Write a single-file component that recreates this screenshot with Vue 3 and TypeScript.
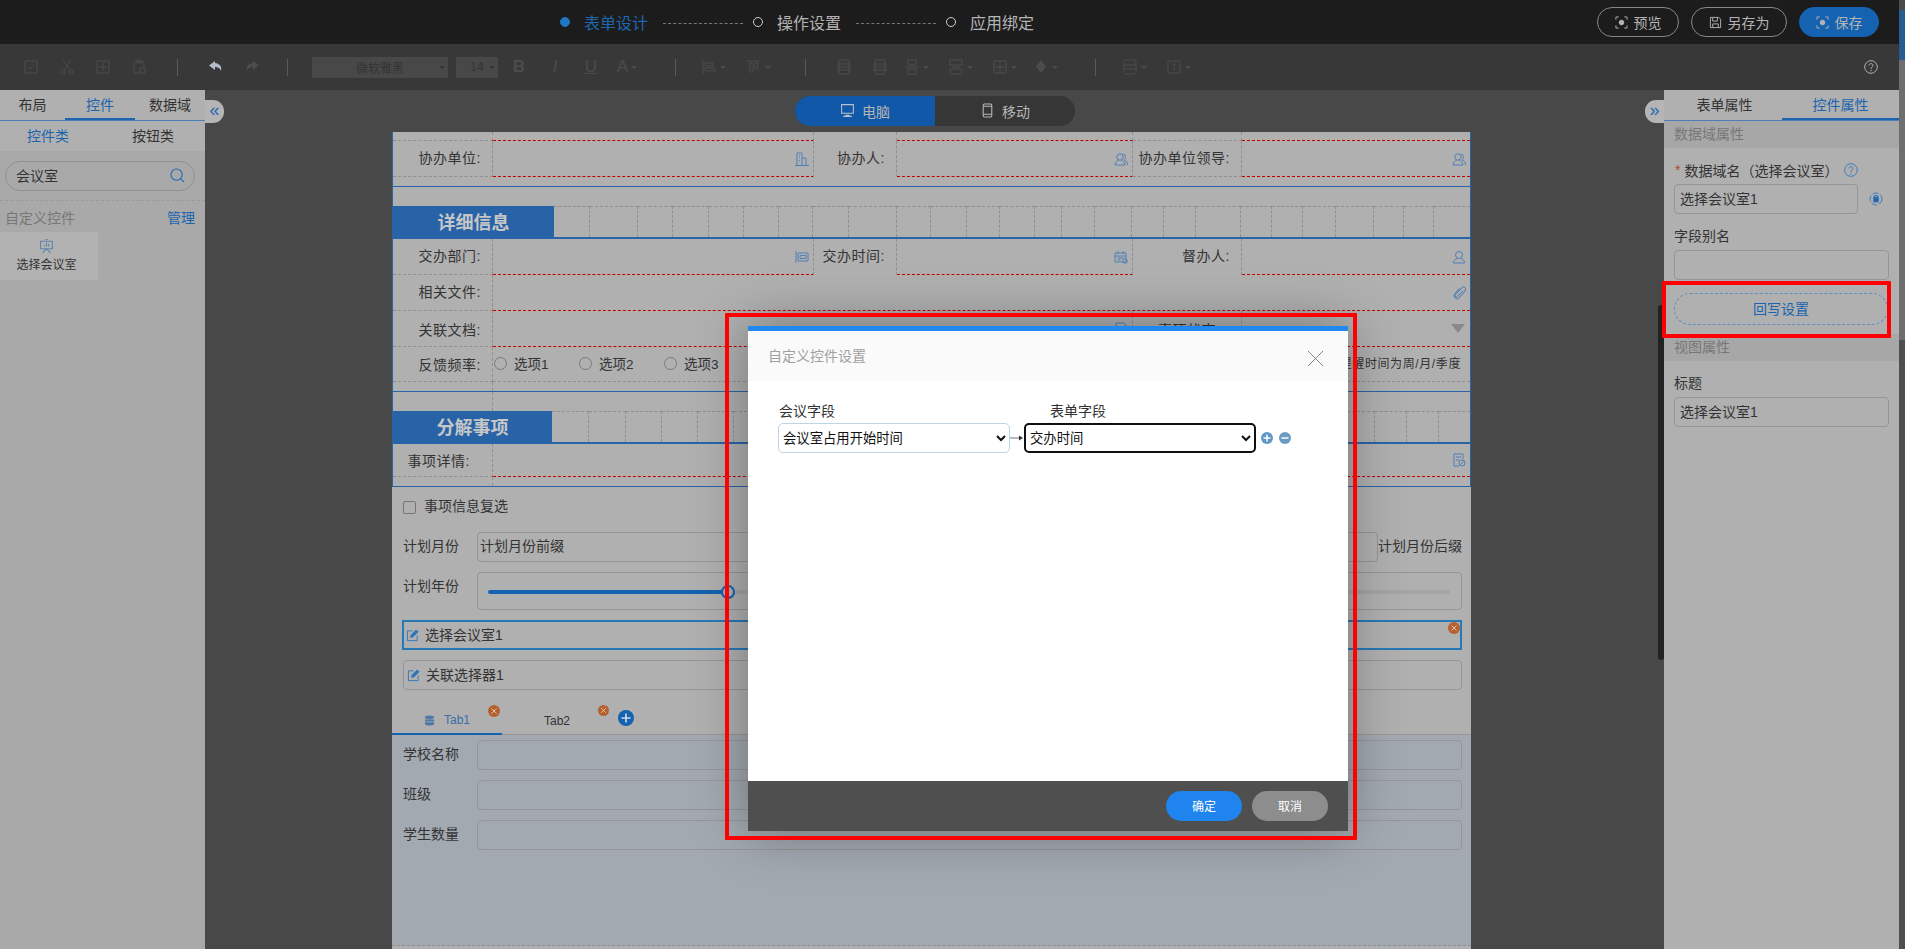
<script setup lang="ts">
const bounds1: number[] = [554, 590, 638, 673, 709, 744, 779, 813, 849, 897, 931, 967, 1000, 1035, 1062, 1095, 1132, 1164, 1196, 1241, 1272, 1303, 1336, 1374, 1404, 1434, 1470]
const bounds2: number[] = [552, 589, 626, 662, 698, 734, 1375, 1407, 1439, 1470]
const widths = (b: number[]): number[] => b.slice(1).map((v, i) => v - b[i])
const cells1 = widths(bounds1)
const cells2 = widths(bounds2)
const radios: string[] = ['选项1', '选项2', '选项3']
const leftTabs: string[] = ['布局', '控件', '数据域']
const tabFields: string[] = ['学校名称', '班级', '学生数量']
</script>

<template>
  <div class="app">
    <header class="topbar">
      <div class="steps">
        <span class="dot on"></span><span class="step on">表单设计</span>
        <span class="dash"></span>
        <span class="dot"></span><span class="step">操作设置</span>
        <span class="dash"></span>
        <span class="dot"></span><span class="step">应用绑定</span>
      </div>
      <div class="actions">
        <button class="pill w82"><svg class="ico14" viewBox="0 0 14 14" fill="none" stroke="currentColor"><path d="M1 4V1h3M10 1h3v3M13 10v3h-3M4 13H1v-3"/><circle cx="7" cy="7" r="2.5" fill="currentColor"/></svg>预览</button>
        <button class="pill w96"><svg class="ico14" viewBox="0 0 14 14" fill="none" stroke="currentColor"><path d="M1.500 1.500h9l2 2v9h-11zM4 1.500v4h5v-4M4 12.500v-4h6v4"/></svg>另存为</button>
        <button class="pill w80 primary"><svg class="ico14" viewBox="0 0 14 14" fill="none" stroke="currentColor"><path d="M1 4V1h3M10 1h3v3M13 10v3h-3M4 13H1v-3"/><circle cx="7" cy="7" r="2.500" fill="currentColor"/></svg>保存</button>
      </div>
    </header>

    <div class="toolbar">
      <span class="tool"><svg viewBox="0 0 16 16"><path d="M2 2h12v12H2zM5 8l2 2 4-4"/></svg></span>
      <span class="tool"><svg viewBox="0 0 16 16"><circle cx="4" cy="13" r="2"/><circle cx="12" cy="13" r="2"/><path d="M5 11L12 1M11 11L4 1"/></svg></span>
      <span class="tool"><svg viewBox="0 0 16 16"><path d="M2 2h12v12H2zM8 4v8M4 8h8"/></svg></span>
      <span class="tool"><svg viewBox="0 0 16 16"><path d="M3 3h10v5M3 3v11h5M6 1h4v3H6zM9 9h5v5H9z"/></svg></span>
      <span class="sep m20"></span>
      <span class="tool m20"><svg class="bright" viewBox="0 0 16 16"><path d="M7 2L1 6.500 7 11V8c3 0 5 1 6 4 1-4-1-7.500-6-8z"/></svg></span>
      <span class="tool"><svg class="fill" viewBox="0 0 16 16"><path d="M9 2l6 4.500L9 11V8c-3 0-5 1-6 4-1-4 1-7.500 6-8z"/></svg></span>
      <span class="sep m17"></span>
      <span class="fsel family m24">微软雅黑<i class="caret"></i></span>
      <span class="fsel size">14<i class="caret"></i></span>
      <span class="tool txt bold m3">B</span>
      <span class="tool txt ital">I</span>
      <span class="tool txt under">U</span>
      <span class="tool txt">A<i class="caret"></i></span>
      <span class="sep m30"></span>
      <span class="tool m19"><svg viewBox="0 0 16 16"><path d="M2 1v14M4 4h8v3H4zM4 9h10v3H4z"/></svg><i class="caret"></i></span>
      <span class="tool m9"><svg viewBox="0 0 16 16"><path d="M1 2h14M4 4v9h3V4zM9 4v6h3V4z"/></svg><i class="caret"></i></span>
      <span class="sep m29"></span>
      <span class="tool m20"><svg viewBox="0 0 16 16"><path d="M3 1h10v14H3zM1 5h14M1 8h14M1 11h14"/></svg></span>
      <span class="tool"><svg viewBox="0 0 16 16"><path d="M3 1h10v14H3zM1 5h14M1 8h14M1 11h14"/></svg></span>
      <span class="tool"><svg viewBox="0 0 16 16"><path d="M4 1h8v5H4zM4 10h8v5H4zM1 8h14"/></svg><i class="caret"></i></span>
      <span class="tool m8"><svg viewBox="0 0 16 16"><path d="M2 1h12v5H2zM2 10h12v5H2zM4 8h8"/></svg><i class="caret"></i></span>
      <span class="tool m8"><svg viewBox="0 0 16 16"><path d="M2 2h12v12H2zM8 2v12M2 8h12"/></svg><i class="caret"></i></span>
      <span class="tool m5"><svg class="fill" viewBox="0 0 16 16"><path d="M8 1l5 7-5 6-5-6z"/></svg><i class="caret"></i></span>
      <span class="sep m32"></span>
      <span class="tool m20"><svg viewBox="0 0 16 16"><rect x="2" y="1" width="12" height="14" rx="2"/><path d="M2 6h12M2 10h12"/></svg><i class="caret"></i></span>
      <span class="tool m8"><svg viewBox="0 0 16 16"><path d="M2 2h12v12H2zM8 5v6M6 5h4"/></svg><i class="caret"></i></span>
      <svg class="help" viewBox="0 0 14 14" fill="none" stroke="#b4b4b4"><circle cx="7" cy="7" r="6.300"/><path d="M5 5.500C5 3 9 3 9 5.500 9 7 7 7 7 9M7 10v1.300"/></svg>
    </div>

    <div class="main">
      <aside class="left">
        <div class="ltabs">
          <span v-for="(t, i) in leftTabs" :key="t" class="ltab" :class="{ active: i === 1 }">{{ t }}</span>
        </div>
        <div class="lsub"><span class="blue">控件类</span><span>按钮类</span></div>
        <div class="search">
          <span>会议室</span>
          <svg viewBox="0 0 16 16" fill="none" stroke="#1f69b4" stroke-width="1.200"><circle cx="7" cy="7" r="6"/><path d="M11.500 11.500L15 15"/></svg>
        </div>
        <div class="customhead"><span class="muted">自定义控件</span><span class="blue">管理</span></div>
        <div class="citem">
          <svg viewBox="0 0 14 14" fill="none" stroke="#5f84ac"><path d="M6 1h2M1.500 2.500h11v7h-11zM7 9.500L3.500 13.500M7 9.500l3.500 4M5 7.500V6M7 7.500V4M9 7.500V5"/></svg>
          <span>选择会议室</span>
        </div>
      </aside>

      <section class="center">
        <span class="collapse cl">«</span>
        <span class="collapse cr">»</span>
        <span class="vscroll"></span>
        <div class="device">
          <span class="dev on"><svg viewBox="0 0 14 14" fill="#b9c1cb"><path d="M1 1h12v9H1zM2 2v7h10V2zM5 11h4v1h2v1H3v-1h2z" fill-rule="evenodd"/></svg>电脑</span>
          <span class="dev"><svg viewBox="0 0 14 14" fill="none" stroke="#b8b8b8"><rect x="3" y="1" width="8" height="12" rx="1"/><path d="M3 3h8M3 10.500h8"/></svg>移动</span>
        </div>

        <div class="canvas">
          <div class="table">
            <div class="row r-top">
              <span class="lab"></span><span class="val"></span><span class="lab none"></span><span class="val"></span><span class="lab"></span><span class="val"></span>
            </div>
            <div class="row up">
              <span class="lab">协办单位:</span>
              <span class="val"><svg class="fi" viewBox="0 0 14 14"><path d="M2 13V1h5v12M7 6h4v7M0 13.500h14M4 3.500h1M4 6h1M4 8.500h1"/></svg></span>
              <span class="lab none">协办人:</span>
              <span class="val"><svg class="fi" viewBox="0 0 14 14"><circle cx="6" cy="5" r="3.200"/><path d="M1 13c0-3 2-4 3.500-4.500M7.500 8.500C9 9 11 10 11 13H1M9 2c3 0 3 5 1 6 2 .5 3.500 2 3.500 5"/></svg></span>
              <span class="lab">协办单位领导:</span>
              <span class="val"><svg class="fi" viewBox="0 0 14 14"><circle cx="6" cy="5" r="3.200"/><path d="M1 13c0-3 2-4 3.500-4.500M7.500 8.500C9 9 11 10 11 13H1M9 2c3 0 3 5 1 6 2 .5 3.500 2 3.500 5"/></svg></span>
            </div>
            <div class="gap9"></div>
            <div class="bline"></div>
            <div class="gap19"></div>

            <div class="sechead">
              <span class="secname w1">详细信息</span>
              <span v-for="(w, i) in cells1" :key="i" class="seccell" :style="{ width: w + 'px' }"></span>
            </div>

            <div class="row up">
              <span class="lab">交办部门:</span>
              <span class="val"><svg class="fi" viewBox="0 0 14 14"><path d="M1 1v12M3 3h10v8H3zM5 5.500h6v3H5z"/></svg></span>
              <span class="lab none">交办时间:</span>
              <span class="val"><svg class="fi" viewBox="0 0 14 14"><path d="M1 3h11v9H1zM1 6h11M4 1v3M9 1v3M3.500 8h6M3.500 10h3"/><circle cx="11" cy="11" r="2.300"/></svg></span>
              <span class="lab none">督办人:</span>
              <span class="val"><svg class="fi" viewBox="0 0 14 14"><circle cx="7" cy="5" r="3.500"/><path d="M5 8.500C3 9.500 1.500 10.500 1.500 13h11c0-2.500-1.500-3.500-3.500-4.500"/></svg></span>
            </div>
            <div class="row up">
              <span class="lab">相关文件:</span>
              <span class="val s5"><svg class="fi clip" viewBox="0 0 14 14"><path d="M11 4.500l-5.500 6c-1.500 1.500-3.500-.5-2-2l6-6.500c2.500-2.500 5.500.5 3.500 3L7 12c-2.500 2.500-6.500-1-4-4.500l4.500-5"/></svg></span>
            </div>
            <div class="row">
              <span class="lab">关联文档:</span>
              <span class="val s3"><svg class="fi" viewBox="0 0 14 14"><path d="M2 1h8l2 2v10H2z"/></svg></span>
              <span class="lab none center-t">事项状态</span>
              <span class="val"><i class="tri"></i></span>
            </div>
            <div class="row r-35">
              <span class="lab">反馈频率:</span>
              <span class="val s5 grayb">
                <label v-for="r in radios" :key="r" class="radio"><i></i>{{ r }}</label>
                <span class="remind">设置提醒时间为周/月/季度</span>
              </span>
            </div>
            <div class="spacer s-9"></div>
            <div class="bline"></div>
            <div class="spacer s-19"></div>

            <div class="sechead">
              <span class="secname w2">分解事项</span>
              <span v-for="(w, i) in cells2" :key="i" class="seccell" :style="{ width: w + 'px' }"></span>
            </div>
            <div class="row r-33">
              <span class="lab pr22">事项详情:</span>
              <span class="val s5"><svg class="fi" viewBox="0 0 14 14"><path d="M11 6V1H2v12h5M4 4h5M4 7h3"/><circle cx="10" cy="10" r="3"/><path d="M8.500 11.500l3-3"/></svg></span>
            </div>
            <div class="spacer s-9"></div>
            <div class="bline"></div>
          </div>

          <div class="lower">
            <label class="check"><i></i><span class="checktext">事项信息复选</span></label>
            <div class="frow m18">
              <span class="flabel lift">计划月份</span>
              <span class="finput grow lift">计划月份前缀</span>
              <span class="suffix">计划月份后缀</span>
            </div>
            <div class="frow m10 tall">
              <span class="flabel top">计划年份</span>
              <div class="finput grow slider">
                <span class="fillbar"></span><span class="knob"></span><span class="restbar"></span>
              </div>
            </div>
            <div class="ctrl selected">
              <svg class="edit" viewBox="0 0 14 14" fill="none" stroke="#2f76ba"><path d="M7 2H1.500v10.500H12V7"/><path d="M5 9l.5-2.500L11 1l2 2-5.500 5.500z" fill="#2f76ba"/></svg>
              选择会议室1
              <svg class="badge b-sel" viewBox="0 0 12 12"><circle cx="6" cy="6" r="6" fill="#b5602f"/><path d="M3.500 3.500l5 5M8.500 3.500l-5 5" stroke="#e4c4b0"/></svg>
            </div>
            <div class="ctrl">
              <svg class="edit" viewBox="0 0 14 14" fill="none" stroke="#2f76ba"><path d="M7 2H1.500v10.500H12V7"/><path d="M5 9l.5-2.500L11 1l2 2-5.500 5.500z" fill="#2f76ba"/></svg>
              关联选择器1
            </div>
          </div>

          <div class="ftabs">
            <span class="ftab active">
              <svg viewBox="0 0 12 12" fill="#4f78a6"><ellipse cx="6" cy="2.500" rx="5" ry="2"/><path d="M1 5h10v2H1zM1 8h10v1.500c0 1-2 2-5 2s-5-1-5-2z"/></svg>
              Tab1
              <svg class="badge b-t1" viewBox="0 0 12 12"><circle cx="6" cy="6" r="6" fill="#b5602f"/><path d="M3.500 3.500l5 5M8.500 3.500l-5 5" stroke="#e4c4b0"/></svg>
            </span>
            <span class="ftab second">
              Tab2
              <svg class="badge b-t2" viewBox="0 0 12 12"><circle cx="6" cy="6" r="6" fill="#b5602f"/><path d="M3.500 3.500l5 5M8.500 3.500l-5 5" stroke="#e4c4b0"/></svg>
            </span>
            <svg class="addtab" viewBox="0 0 16 16"><circle cx="8" cy="8" r="8" fill="#1462b0"/><path d="M8 3.500v9M3.500 8h9" stroke="#d8dde2" stroke-width="1.600"/></svg>
          </div>
          <div class="tabpanel">
            <div v-for="f in tabFields" :key="f" class="frow">
              <span class="flabel">{{ f }}</span>
              <span class="finput grow"></span>
            </div>
          </div>
        </div>
      </section>

      <aside class="right">
        <div class="rtabs"><span class="first">表单属性</span><span class="active">控件属性</span></div>
        <div class="rhead h27">数据域属性</div>
        <div class="rbody">
          <div class="rlabel l1"><em>*</em>数据域名（选择会议室）
            <svg class="q" viewBox="0 0 14 14" fill="none" stroke="#3e7cbc"><circle cx="7" cy="7" r="6.300"/><path d="M5 5.500C5 3 9 3 9 5.500 9 7 7 7 7 9M7 10v1.300"/></svg>
          </div>
          <div class="rinline">
            <span class="rinput w184">选择会议室1</span>
            <svg class="lock" viewBox="0 0 14 14" fill="none" stroke="#3e7cbc"><circle cx="7" cy="7" r="6" stroke-dasharray="6 2"/><rect x="4.500" y="5" width="5" height="5" fill="#2a66a8"/><path d="M5.500 5V3.500h3V5"/></svg>
          </div>
          <div class="rlabel l2">字段别名</div>
          <span class="rinput full"></span>
          <button class="writeback">回写设置</button>
        </div>
        <div class="rhead h27 mt9">视图属性</div>
        <div class="rbody">
          <div class="rlabel l3">标题</div>
          <span class="rinput full">选择会议室1</span>
        </div>
      </aside>
    </div>

    <span class="pagebar"></span>

    <div class="dialog">
      <div class="dhead">
        <span>自定义控件设置</span>
        <svg class="close" viewBox="0 0 15 15" fill="none" stroke="#666" stroke-width=".8"><path d="M0 0l15 15M15 0L0 15"/></svg>
      </div>
      <div class="dbody">
        <div class="dlabels"><span>会议字段</span><span class="second">表单字段</span></div>
        <div class="dselects">
          <select class="sel one"><option>会议室占用开始时间</option></select>
          <svg class="arrow" viewBox="0 0 14 6"><path d="M0 3h10" stroke="#777"/><path d="M9 0.500L13 3 9 5.500z" fill="#333"/></svg>
          <select class="sel two"><option>交办时间</option></select>
          <svg class="roundbtn first" viewBox="0 0 12 12"><circle cx="6" cy="6" r="6" fill="#5f97c8"/><path d="M6 2.500v7M2.500 6h7" stroke="#fff" stroke-width="1.500"/></svg>
          <svg class="roundbtn" viewBox="0 0 12 12"><circle cx="6" cy="6" r="6" fill="#6a9cc4"/><path d="M2.500 6h7" stroke="#fff" stroke-width="1.500"/></svg>
        </div>
      </div>
      <div class="dfoot">
        <button class="dbtn ok">确定</button>
        <button class="dbtn cancel">取消</button>
      </div>
    </div>

    <span class="redbox rb1"></span>
    <span class="redbox rb2"></span>
  </div>
</template>

<style scoped>
.app {
  position: relative;
  width: 1905px;
  height: 949px;
  overflow: hidden;
  display: flex;
  flex-direction: column;
  background: #484848;
  color: #333;
  font: 14px "Liberation Sans", "Noto Sans CJK SC", sans-serif;
}
button { font: inherit; cursor: pointer; }
i { display: block; font-style: normal; }

/* top bar */
.topbar { height: 44px; flex: none; background: #1c1c1c; display: flex; align-items: center; }
.steps { margin-left: 560px; display: flex; align-items: center; }
.dot { width: 10px; height: 10px; border: 1px solid #ccc; border-radius: 50%; box-sizing: border-box; }
.dot.on { background: #1f78c4; border-color: #1f78c4; }
.step { margin-left: 14px; font-size: 16px; color: #b4b4b4; }
.step.on { color: #1f66b0; }
.dash { width: 80px; margin: 2px 10px 0 15px; border-top: 1px dashed #777; }
.actions { margin-left: auto; margin-right: 26px; display: flex; gap: 12px; }
.pill {
  height: 30px; border: 1px solid #888; border-radius: 15px; background: transparent; color: #b4b4b4;
  display: flex; align-items: center; justify-content: center; gap: 6px; padding: 0; box-sizing: border-box;
}
.w82 { width: 82px; } .w96 { width: 96px; } .w80 { width: 80px; }
.primary { background: #1462b0; border-color: #1462b0; }
.ico14 { width: 13px; height: 13px; }

/* toolbar */
.toolbar { height: 46px; flex: none; background: #383838; display: flex; align-items: center; padding-left: 13px; box-sizing: border-box; }
.tool { width: 36px; height: 20px; flex: none; display: flex; align-items: center; justify-content: center; position: relative; color: #4c4c4c; }
.tool svg { width: 16px; height: 16px; fill: none; stroke: #4c4c4c; }
.tool svg.fill { fill: #4c4c4c; stroke: none; }
.tool svg.bright { fill: #b4bcc8; stroke: none; }
.tool .caret { margin-left: 3px; }
.txt { font-size: 17px; font-family: "Liberation Sans", sans-serif; }
.bold { font-weight: 700; } .ital { font-style: italic; } .under { text-decoration: underline; }
.sep { width: 1px; height: 17px; flex: none; background: #5a5a5a; }
.caret { width: 0; height: 0; border: 3px solid transparent; border-top: 3px solid #4c4c4c; border-bottom: 0; }
.fsel { height: 21px; flex: none; background: #484848; color: #343434; font-size: 12px; display: flex; align-items: center; justify-content: center; position: relative; }
.fsel .caret { position: absolute; right: 3px; top: 9px; border-top-color: #333; }
.family { width: 136px; } .size { width: 42px; margin-left: 8px; }
.m3 { margin-left: 3px; } .m5 { margin-left: 5px; } .m8 { margin-left: 8px; } .m9 { margin-left: 9px; }
.m17 { margin-left: 17px; } .m19 { margin-left: 19px; } .m20 { margin-left: 20px; } .m24 { margin-left: 24px; }
.m29 { margin-left: 29px; } .m30 { margin-left: 30px; } .m32 { margin-left: 32px; }
.help { width: 14px; height: 14px; margin-left: auto; margin-right: 27px; }

.main { flex: 1; display: flex; min-height: 0; padding-right: 6px; }

/* left panel */
.left { width: 205px; flex: none; background: #a9a9a9; }
.ltabs { height: 31px; display: grid; grid-template-columns: 65px 70px 70px; background: #b0b0b0; border-bottom: 1px solid #4c7fb8; box-sizing: border-box; }
.ltab { display: flex; align-items: center; justify-content: center; padding-bottom: 2px; }
.ltab.active { color: #1c64ae; box-shadow: inset 0 -2px 0 #1c64ae; }
.lsub { height: 30px; display: grid; grid-template-columns: 96px 114px; background: #b0b0b0; align-items: center; text-align: center; padding-bottom: 2px; box-sizing: border-box; }
.blue { color: #1c64ae; }
.search {
  margin: 10px 10px 0 5px; height: 30px; border: 1px solid #909090; border-radius: 15px; box-sizing: border-box;
  display: flex; align-items: center; justify-content: space-between; padding: 0 9px 2px 10px;
}
.search svg { width: 15px; height: 15px; }
.customhead { margin-top: 9px; height: 32px; border-top: 1px dashed #9a9a9a; display: flex; align-items: center; justify-content: space-between; padding: 0 10px 0 5px; box-sizing: border-box; }
.muted { color: #777; }
.citem { width: 98px; height: 48px; background: #b2b2b2; display: flex; flex-direction: column; align-items: center; justify-content: center; font-size: 12px; gap: 1px; padding: 0 5px 2px 0; box-sizing: border-box; }
.citem svg { width: 15px; height: 16px; }

/* centre */
.center { flex: 1; position: relative; display: flex; flex-direction: column; min-width: 0; }
.collapse {
  position: absolute; top: 10px; width: 19px; height: 23px; background: #b5b5b5; color: #1f69b4;
  display: flex; align-items: center; justify-content: center; font-size: 18px; line-height: 19px; padding-bottom: 3px; box-sizing: border-box;
}
.cl { left: 0; border-radius: 0 11px 11px 0; }
.cr { right: 0; border-radius: 11px 0 0 11px; }
.vscroll { position: absolute; right: 0; top: 215px; width: 6px; height: 355px; background: #222; border-radius: 3px; }
.device { margin: 6px 0 0 590px; width: 280px; height: 30px; border-radius: 15px; overflow: hidden; display: flex; background: #363636; flex: none; }
.dev { flex: 1; display: flex; align-items: center; justify-content: center; gap: 7px; color: #b4b4b4; padding-bottom: 1px; box-sizing: border-box; }
.dev.on { background: #1158a8; }
.dev svg { width: 15px; height: 15px; }

.canvas { margin: 6px 0 0 187px; width: 1079px; flex: 1; background: #b0b0b0; display: flex; flex-direction: column; min-height: 0; }
.table { border: solid #2a64a8; border-width: 0 1px; }
.row { display: grid; grid-template-columns: 100px 321px 83px 236px 109px 228px; height: 36px; box-sizing: border-box; }
.r-top { height: 9px; }
.r-35 { height: 35px; }
.r-33 { height: 33px; }
.lab, .val { box-sizing: border-box; border-right: 1px dashed #8f8f8f; border-bottom: 1px dashed #8f8f8f; display: flex; align-items: center; }
.lab { justify-content: flex-end; padding-right: 11px; white-space: nowrap; letter-spacing: .5px; }
.val { border-bottom: 1px dashed #c00000; justify-content: flex-end; padding-right: 4px; }
.val:last-child { border-right: 0; }
.lab.none { border-bottom-color: transparent; }
.up .lab { padding-bottom: 4px; }
.center-t { justify-content: center; padding-right: 0; }
.pr22 { padding-right: 22px; }
.s3 { grid-column: span 3; }
.s5 { grid-column: span 5; }
.grayb { border-bottom-color: #8f8f8f; justify-content: flex-start; padding: 0 9px 3px 1px; }
.fi { width: 14px; height: 14px; fill: none; stroke: #4f7fb5; }
.clip { stroke: #3f74b2; }
.tri { width: 0; height: 0; border: 7px solid transparent; border-top: 9px solid #8a8a8a; border-bottom: 0; margin-right: 1px; }
.radio { width: 85px; display: flex; align-items: center; font-size: 13.5px; gap: 7px; flex: none; }
.radio i { width: 13px; height: 13px; border: 1px solid #7a7a7a; border-radius: 50%; box-sizing: border-box; margin-top: 1px; }
.remind { margin-left: auto; font-size: 12px; letter-spacing: .6px; }
.gap9 { height: 9px; }
.gap19 { height: 19px; }
.bline { height: 1px; background: #2a64a8; }
.spacer { width: 100px; box-sizing: border-box; border-right: 1px dashed #8f8f8f; }
.s-9 { height: 9px; }
.s-19 { height: 19px; }
.sechead { height: 33px; display: flex; box-sizing: border-box; border-bottom: 2px solid #2a64a8; }
.secname { background: #2863a8; color: #c6c6c6; font-weight: 700; font-size: 18px; display: flex; align-items: center; justify-content: center; flex: none; height: 31px; padding-bottom: 2px; box-sizing: border-box; }
.w1 { width: 161px; } .w2 { width: 159px; }
.seccell { border-top: 1px dashed #8f8f8f; border-right: 1px dashed #8f8f8f; box-sizing: border-box; flex: none; }
.seccell:last-child { border-right: 0; }

/* lower form */
.lower { padding: 13px 9px 0 11px; }
.check { display: flex; align-items: center; height: 14px; gap: 8px; }
.check i { width: 13px; height: 13px; border: 1px solid #777; border-radius: 2px; box-sizing: border-box; }
.checktext { margin-top: -4px; }
.frow { display: flex; height: 30px; align-items: center; }
.m18 { margin-top: 18px; }
.m10 { margin-top: 10px; }
.tall { height: 38px; align-items: stretch; }
.flabel { width: 74px; flex: none; }
.flabel.top { line-height: 28px; }
.lift { padding-bottom: 4px; }
.finput { border: 1px solid #959595; border-radius: 4px; box-sizing: border-box; height: 100%; display: flex; align-items: center; padding-left: 2px; }
.grow { flex: 1; min-width: 0; }
.suffix { width: 84px; flex: none; padding-bottom: 4px; }
.slider { padding: 2px 11px 0 10px; }
.fillbar { width: 234px; height: 4px; background: #1462b0; border-radius: 2px 0 0 2px; }
.knob { width: 14px; height: 14px; border: 2px solid #1462b0; border-radius: 50%; box-sizing: border-box; margin-left: -1px; flex: none; }
.restbar { flex: 1; height: 4px; background: #a4a4a4; border-radius: 0 2px 2px 0; }
.ctrl { position: relative; height: 30px; margin-top: 10px; border: 1px solid #959595; border-radius: 4px; box-sizing: border-box; display: flex; align-items: center; padding: 0 0 2px 3px; gap: 6px; }
.ctrl.selected { margin-left: -1px; border: 2px solid #2878b5; border-radius: 0; padding: 0 0 2px 2px; }
.edit { width: 13px; height: 13px; margin-top: 2px; }
.badge { position: absolute; width: 12px; height: 12px; margin: 0; }
.b-sel { right: 0; top: 0; }
.ftabs { position: relative; height: 45px; flex: none; display: flex; border-bottom: 1px solid #979797; box-sizing: border-box; }
.ftab { position: relative; width: 110px; height: 45px; flex: none; display: flex; align-items: center; justify-content: center; font-size: 12px; gap: 9px; padding-top: 17px; box-sizing: border-box; }
.ftab svg:first-child { width: 11px; height: 11px; }
.ftab.active { color: #3a6ea8; border-bottom: 2px solid #1462b0; }
.b-t1 { left: 96px; top: 15px; }
.b-t2 { left: 96px; top: 15px; }
.addtab { position: absolute; left: 226px; top: 20px; width: 16px; height: 16px; }
.tabpanel { flex: 1; background: #a2a9b0; padding: 5px 9px 0 11px; border-bottom: 1px dashed #8f8f8f; margin-bottom: 3px; display: flex; flex-direction: column; gap: 10px; }
.tabpanel .flabel { padding-bottom: 4px; }

/* right panel */
.right { width: 235px; flex: none; background: #b0b0b0; }
.rtabs { height: 31px; display: grid; grid-template-columns: 118px 117px; border-bottom: 1px solid #4c7fb8; box-sizing: border-box; }
.rtabs span { display: flex; align-items: center; justify-content: center; padding-bottom: 2px; }
.rtabs .first { padding-left: 3px; }
.rtabs .active { color: #1c64ae; box-shadow: inset 0 -2px 0 #1c64ae; }
.rhead { background: #a7a7a7; color: #777; display: flex; align-items: center; padding: 0 0 3px 10px; box-sizing: border-box; }
.h27 { height: 27px; }
.mt9 { margin-top: 9px; }
.rbody { padding: 0 10px; }
.rlabel { display: flex; align-items: center; }
.rlabel em { color: #a05030; font-style: normal; margin-right: 4px; margin-left: 1px; }
.l1 { height: 16px; margin-top: 14px; margin-bottom: 6px; white-space: pre; }
.l2 { height: 16px; margin-top: 13px; margin-bottom: 7px; }
.l3 { height: 16px; margin-top: 13px; margin-bottom: 7px; }
.q { width: 14px; height: 14px; margin-left: 2px; }
.rinline { display: flex; align-items: center; gap: 11px; }
.rinput { display: flex; align-items: center; height: 30px; border: 1px solid #959595; border-radius: 4px; box-sizing: border-box; padding: 0 0 2px 5px; flex: none; }
.w184 { width: 184px; }
.full { width: 215px; }
.lock { width: 14px; height: 14px; }
.writeback {
  display: block; width: 214px; height: 32px; margin-top: 13px; border: 1px dashed #5a8fc0; border-radius: 16px; background: transparent; color: #1c64ae; padding: 0 0 3px;
}

.pagebar { position: absolute; right: 0; top: 0; width: 6px; height: 949px; background: linear-gradient(#4a4a4a 0 10px, #2a5b8e 10px 60px, #6e6e6e 60px 340px, #4e4e4e 340px); }

/* dialog */
.dialog {
  position: absolute; left: 748px; top: 326px; width: 600px; height: 505px; background: #fff; display: flex; flex-direction: column;
  border-top: 5px solid #2188f0; box-sizing: border-box; box-shadow: 0 0 50px rgba(0, 0, 0, .35);
}
.dhead { height: 50px; flex: none; background: #fafafa; color: #a0a0a0; display: flex; align-items: center; justify-content: space-between; padding: 0 25px 2px 20px; box-sizing: border-box; }
.close { width: 15px; height: 15px; margin-top: 6px; }
.dbody { flex: 1; padding: 21px 0 0 30px; color: #333; }
.dlabels { height: 16px; display: flex; align-items: center; margin-left: 1px; }
.dlabels .second { margin-left: 215px; }
.dselects { margin-top: 5px; display: flex; align-items: center; }
.sel { height: 30px; background: #fff; color: #111; font: 13.333px "Liberation Sans", "Noto Sans CJK SC", sans-serif; box-sizing: border-box; border-radius: 5px; }
.one { width: 232px; border: 1px solid #bcd4e4; }
.two { width: 232px; border: 2px solid #101010; }
.arrow { width: 14px; height: 6px; flex: none; }
.roundbtn { width: 12px; height: 12px; margin-left: 6px; flex: none; }
.roundbtn.first { margin-left: 5px; }
.dfoot { height: 50px; flex: none; background: #4f4f4f; display: flex; align-items: center; justify-content: flex-end; gap: 10px; padding-right: 20px; }
.dbtn { width: 76px; height: 30px; border: 0; border-radius: 15px; color: #fff; font-size: 12px; padding: 0 0 2px; }
.ok { background: #1f84ed; }
.cancel { background: #8d8d8d; }

.redbox { position: absolute; border: 4px solid #f00; box-sizing: border-box; border-radius: 1px; }
.rb1 { left: 725px; top: 313px; width: 632px; height: 527px; }
.rb2 { left: 1662px; top: 281px; width: 229px; height: 57px; }
</style>

<style>
html, body { margin: 0; background: #484848; overflow: hidden; }
</style>
